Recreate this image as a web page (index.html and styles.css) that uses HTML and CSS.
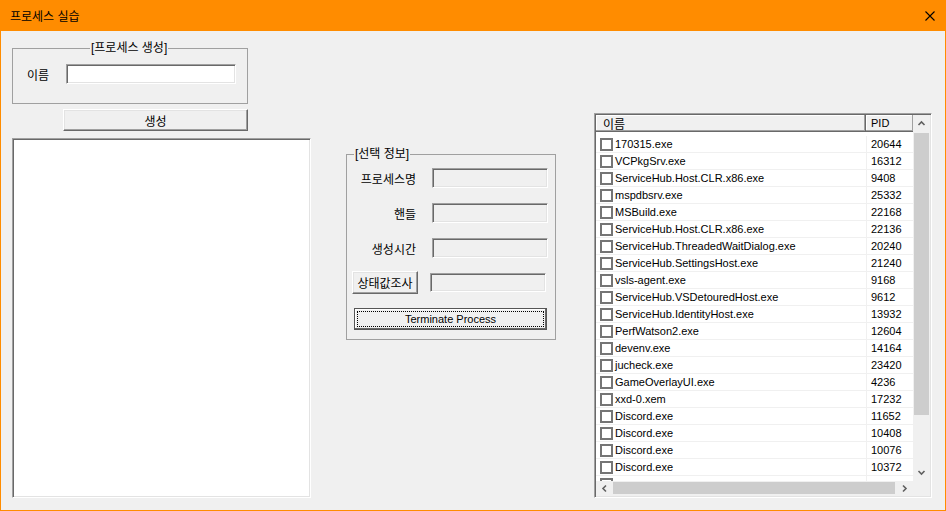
FILE: index.html
```html
<!DOCTYPE html>
<html lang="ko">
<head>
<meta charset="utf-8">
<title>프로세스 실습</title>
<link rel="stylesheet" href="styles.css">
</head>
<body>
<div class="window">
  <div class="titlebar">
    <span class="title">프로세스 실습</span>
    <svg class="close" width="10" height="10" viewBox="0 0 10 10"><path d="M0.5 0.5 L9.5 9.5 M9.5 0.5 L0.5 9.5" stroke="#000" stroke-width="1.1" fill="none"/></svg>
  </div>
  <div class="content">
    <div class="col-left">
      <fieldset class="group g-create">
        <legend class="legend-create">[프로세스 생성]</legend>
        <div class="group-body create-body">
          <div class="field-row"><span class="lbl">이름</span><div class="edit edit-name"></div></div>
        </div>
      </fieldset>
      <button class="btn btn-create">생성</button>
      <div class="listbox"></div>
    </div>

    <fieldset class="group g-info">
      <legend class="legend-info">[선택 정보]</legend>
      <div class="group-body info-body">
        <div class="info-row"><span class="info-lbl">프로세스명</span><div class="edit disabled"></div></div>
        <div class="info-row gap"><span class="info-lbl">핸들</span><div class="edit disabled"></div></div>
        <div class="info-row gap"><span class="info-lbl">생성시간</span><div class="edit disabled"></div></div>
        <div class="info-row status"><button class="btn btn-status">상태값조사</button><div class="edit disabled edit-status"></div></div>
        <button class="btn btn-default">Terminate Process</button>
      </div>
    </fieldset>

    <div class="listview">
      <div class="lv-top">
        <div class="lv-main">
          <div class="lv-header"><div class="hcell hname">이름</div><div class="hcell hpid">PID</div></div>
          <div class="lv-rows">
            <div class="row"><div class="c-name"><span class="chk"></span>170315.exe</div><div class="c-pid">20644</div></div>
            <div class="row"><div class="c-name"><span class="chk"></span>VCPkgSrv.exe</div><div class="c-pid">16312</div></div>
            <div class="row"><div class="c-name"><span class="chk"></span>ServiceHub.Host.CLR.x86.exe</div><div class="c-pid">9408</div></div>
            <div class="row"><div class="c-name"><span class="chk"></span>mspdbsrv.exe</div><div class="c-pid">25332</div></div>
            <div class="row"><div class="c-name"><span class="chk"></span>MSBuild.exe</div><div class="c-pid">22168</div></div>
            <div class="row"><div class="c-name"><span class="chk"></span>ServiceHub.Host.CLR.x86.exe</div><div class="c-pid">22136</div></div>
            <div class="row"><div class="c-name"><span class="chk"></span>ServiceHub.ThreadedWaitDialog.exe</div><div class="c-pid">20240</div></div>
            <div class="row"><div class="c-name"><span class="chk"></span>ServiceHub.SettingsHost.exe</div><div class="c-pid">21240</div></div>
            <div class="row"><div class="c-name"><span class="chk"></span>vsls-agent.exe</div><div class="c-pid">9168</div></div>
            <div class="row"><div class="c-name"><span class="chk"></span>ServiceHub.VSDetouredHost.exe</div><div class="c-pid">9612</div></div>
            <div class="row"><div class="c-name"><span class="chk"></span>ServiceHub.IdentityHost.exe</div><div class="c-pid">13932</div></div>
            <div class="row"><div class="c-name"><span class="chk"></span>PerfWatson2.exe</div><div class="c-pid">12604</div></div>
            <div class="row"><div class="c-name"><span class="chk"></span>devenv.exe</div><div class="c-pid">14164</div></div>
            <div class="row"><div class="c-name"><span class="chk"></span>jucheck.exe</div><div class="c-pid">23420</div></div>
            <div class="row"><div class="c-name"><span class="chk"></span>GameOverlayUI.exe</div><div class="c-pid">4236</div></div>
            <div class="row"><div class="c-name"><span class="chk"></span>xxd-0.xem</div><div class="c-pid">17232</div></div>
            <div class="row"><div class="c-name"><span class="chk"></span>Discord.exe</div><div class="c-pid">11652</div></div>
            <div class="row"><div class="c-name"><span class="chk"></span>Discord.exe</div><div class="c-pid">10408</div></div>
            <div class="row"><div class="c-name"><span class="chk"></span>Discord.exe</div><div class="c-pid">10076</div></div>
            <div class="row"><div class="c-name"><span class="chk"></span>Discord.exe</div><div class="c-pid">10372</div></div>
            <div class="row"><div class="c-name"><span class="chk"></span></div><div class="c-pid"></div></div>
          </div>
        </div>
        <div class="vscroll">
          <div class="sb-btn"><svg width="17" height="17" viewBox="0 0 17 17"><polyline points="5.5,10 8.5,7 11.5,10" fill="none" stroke="#606060" stroke-width="1.6"/></svg></div>
          <div class="vtrack"><div class="vthumb"></div></div>
          <div class="sb-btn"><svg width="17" height="17" viewBox="0 0 17 17"><polyline points="5.5,7 8.5,10 11.5,7" fill="none" stroke="#606060" stroke-width="1.6"/></svg></div>
        </div>
      </div>
      <div class="hscroll">
        <div class="sb-btn hbtn"><svg width="17" height="15" viewBox="0 0 17 15"><polyline points="10,4.5 7,7.5 10,10.5" fill="none" stroke="#606060" stroke-width="1.6"/></svg></div>
        <div class="htrack"><div class="hthumb"></div></div>
        <div class="sb-btn hbtn"><svg width="17" height="15" viewBox="0 0 17 15"><polyline points="7,4.5 10,7.5 7,10.5" fill="none" stroke="#606060" stroke-width="1.6"/></svg></div>
        <div class="corner"></div>
      </div>
    </div>
  </div>
</div>
</body>
</html>
```

FILE: styles.css
```css
html, body {
  margin: 0;
  padding: 0;
  background: #f0f0f0;
}

.window {
  width: 946px;
  height: 511px;
  display: flex;
  flex-direction: column;
  background: #f0f0f0;
  font-family: "Liberation Sans", "Noto Sans CJK KR", sans-serif;
  font-size: 12px;
  color: #000;
}

.titlebar {
  height: 31px;
  flex: none;
  background: #ff8c00;
  display: flex;
  align-items: center;
  justify-content: space-between;
  padding: 0 11px 0 10px;
}

.title {
  font-family: "Noto Sans CJK KR", sans-serif;
  font-size: 12px;
  line-height: 16px;
}

.close {
  display: block;
  margin-top: 1px;
}

.content {
  flex: 1;
  display: flex;
  align-items: flex-start;
  border: 1px solid #ff8c00;
  border-top: 0;
  padding: 10px 12px 0 11px;
}

.col-left {
  width: 299px;
  display: flex;
  flex-direction: column;
  flex: none;
}

.group {
  margin: 0;
  padding: 0;
  min-width: 0;
  border: 1px solid #a0a0a0;
  box-sizing: border-box;
}

.group legend {
  line-height: 14px;
  padding: 0 1px;
}

.legend-create {
  margin-left: 77px;
}

.legend-info {
  margin-left: 7px;
}

.g-create {
  width: 236px;
}

.create-body {
  padding: 9px 0 19px 14px;
}

.field-row {
  display: flex;
  align-items: center;
}

.lbl {
  width: 39px;
}

.edit {
  box-sizing: border-box;
  height: 20px;
  width: 116px;
  background: #fff;
  border: 1px solid;
  border-color: #a0a0a0 #fff #fff #a0a0a0;
  box-shadow: inset 1px 1px 0 #696969, inset -1px -1px 0 #e3e3e3;
}

.edit.disabled {
  background: #f0f0f0;
}

.edit-name {
  width: 170px;
}

.btn {
  box-sizing: border-box;
  font: inherit;
  color: #000;
  background: #f0f0f0;
  border: 1px solid;
  border-color: #fff #696969 #696969 #fff;
  box-shadow: inset -1px -1px 0 #a0a0a0, inset 1px 1px 0 #e3e3e3;
  padding: 0;
  margin: 0;
}

.btn-create {
  margin: 5px 0 0 51px;
  width: 185px;
  height: 22px;
}

.listbox {
  box-sizing: border-box;
  margin-top: 7px;
  height: 360px;
  background: #fff;
  border: 1px solid;
  border-color: #a0a0a0 #fff #fff #a0a0a0;
  box-shadow: inset 1px 1px 0 #696969, inset -1px -1px 0 #e3e3e3;
}

.g-info {
  flex: none;
  margin-left: 35px;
  margin-top: 106px;
  width: 210px;
}

.info-body {
  padding: 7px 0 9px 5px;
}

.info-row {
  display: flex;
  align-items: center;
  height: 20px;
}

.info-row.gap {
  margin-top: 15px;
}

.info-lbl {
  width: 64px;
  text-align: right;
  margin-right: 16px;
}

.info-row.status {
  margin-top: 13px;
  height: 23px;
}

.btn-status {
  width: 66px;
  height: 23px;
  margin-right: 12px;
}

.edit-status {
  height: 19px;
}

.btn-default {
  display: block;
  margin: 14px 0 0 2px;
  width: 193px;
  height: 22px;
  font-size: 11px;
  border-color: #555;
  box-shadow: inset -1px -1px 0 #696969, inset 1px 1px 0 #fff;
  outline: 1px dotted #000;
  outline-offset: -4px;
}

.listview {
  flex: none;
  box-sizing: border-box;
  margin-left: 38px;
  margin-top: 72px;
  width: 338px;
  height: 385px;
  border: 1px solid;
  border-color: #a0a0a0 #fff #fff #a0a0a0;
  box-shadow: inset 1px 1px 0 #696969, inset -1px -1px 0 #e3e3e3;
  padding: 1px;
  display: flex;
  flex-direction: column;
}

.lv-top {
  flex: 1;
  display: flex;
  min-height: 0;
}

.lv-main {
  flex: 1;
  display: flex;
  flex-direction: column;
  background: #fff;
  overflow: hidden;
}

.lv-header {
  flex: none;
  display: flex;
  height: 17px;
}

.hcell {
  box-sizing: border-box;
  height: 17px;
  display: flex;
  align-items: center;
  background: #f0f0f0;
  border-right: 1px solid #696969;
  border-bottom: 1px solid #696969;
  box-shadow: inset -1px -1px 0 #a0a0a0, inset 1px 1px 0 #fff;
}

.hname {
  width: 270px;
  padding-left: 7px;
}

.hpid {
  flex: 1;
  padding-left: 5px;
  border-right: 0;
  font-size: 11px;
}

.lv-rows {
  padding-top: 4px;
  font-size: 11px;
}

.row {
  box-sizing: border-box;
  height: 17px;
  display: flex;
  border-bottom: 1px solid #f0f0f0;
}

.c-name {
  width: 270px;
  display: flex;
  align-items: center;
  white-space: nowrap;
}

.chk {
  box-sizing: border-box;
  width: 13px;
  height: 13px;
  margin: 0 2px 0 4px;
  border: 2px solid #757575;
  background: #fff;
  flex: none;
}

.c-pid {
  flex: 1;
  display: flex;
  align-items: center;
  border-left: 1px solid #f0f0f0;
  padding-left: 4px;
}

.vscroll {
  width: 17px;
  flex: none;
  display: flex;
  flex-direction: column;
  background: #f0f0f0;
}

.sb-btn {
  width: 17px;
  height: 17px;
  flex: none;
}

.sb-btn.hbtn {
  height: 15px;
}

.sb-btn svg {
  display: block;
}

.vtrack {
  flex: 1;
  padding: 1px 1px 0;
}

.vthumb {
  height: 282px;
  background: #cdcdcd;
}

.hscroll {
  flex: none;
  height: 15px;
  display: flex;
  background: #f0f0f0;
}

.htrack {
  flex: 1;
  padding: 1px 0;
}

.hthumb {
  width: 282px;
  height: 12px;
  background: #cdcdcd;
}

.corner {
  width: 17px;
  flex: none;
  background: #f0f0f0;
}
```
